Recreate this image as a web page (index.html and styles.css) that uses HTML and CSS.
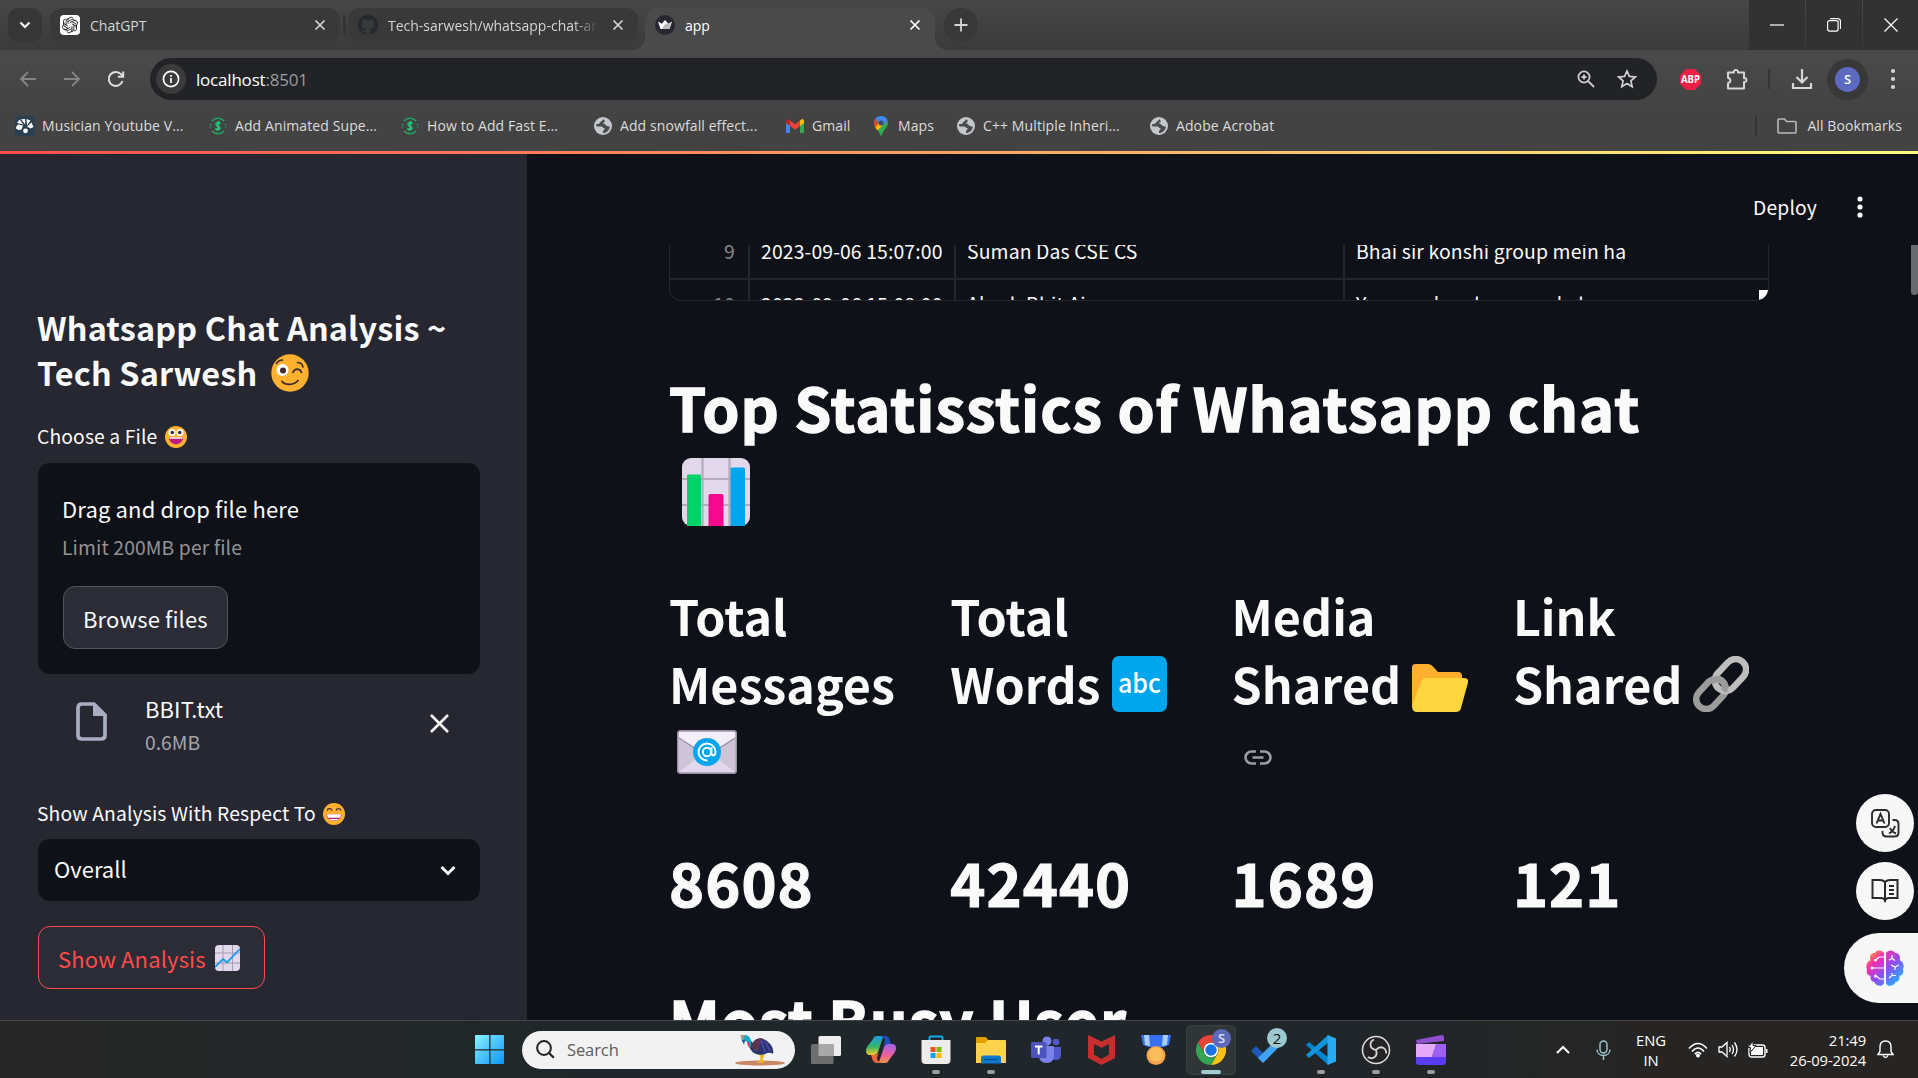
FILE: index.html
```html
<!DOCTYPE html>
<html lang="en">
<head>
<meta charset="utf-8">
<title>app</title>
<link rel="stylesheet" href="styles.css">
</head>
<body>
<svg class="defs" aria-hidden="true">
  <symbol id="close" viewBox="0 0 12 12"><path d="M1.5 1.5l9 9M10.5 1.5l-9 9" fill="none" stroke="currentColor" stroke-width="1.7"/></symbol>
  <symbol id="globe" viewBox="0 0 18 18"><circle cx="9" cy="9" r="9" fill="#c4c7cc"/><path d="M9.500 2.200C8 3 8.300 4 7 4.600 5.500 5.400 6 6.800 4.500 7H2.300c-.6 2 0 2.500 1.700 2.500h3.500c1 0 1.200 1.500 2.200 1.500 1.300 0 1.300 1.300.3 1.800-.8.400-.8 1.400-1.200 3.200 3.800 0 6.500-2.500 7.200-6.500-1.500.5-2.200-.5-3.500-.8-1.500-.4-1-2-2.500-2C8.500 6.700 9 5.500 10 5.300c1.600-.3.500-2.300-.5-3.100z" fill="#4a4b4e"/></symbol>
  <symbol id="swirl" viewBox="0 0 18 18"><g fill="none" stroke="#1fa567" stroke-width="1.500"><path d="M3 4A8 8 0 0 1 15 4M15 14A8 8 0 0 1 3 14"/><path d="M1.500 7v4M16.500 7v4" stroke-dasharray="1.200 1.200"/><path d="M11.500 6.500C10 5 7 5.200 7 7.300c0 2 4 1.500 4 3.700 0 2-3 2-4.800.6M9.800 4.200L8.300 14" stroke="#22c77b" stroke-width="1.600"/></g></symbol>
</svg>

<header class="browser">
  <div class="tabs">
    <div class="tab-search"><svg width="12" height="8" viewBox="0 0 12 8"><path d="M1.500 1.500L6 6l4.500-4.500" fill="none" stroke="#fff" stroke-width="2.200"/></svg></div>
    <div class="tab">
      <svg width="20" height="20" viewBox="0 0 20 20"><rect width="20" height="20" rx="4" fill="#fff"/><g fill="none" stroke="#222" stroke-width=".9" transform="translate(10 10)"><path id="petal" d="M-2-1.200V-4.800a2.900 2.900 0 0 1 5.200-1.800M-2-3.400L1.200-5.200a2.900 2.900 0 0 1 4.200 1.400"/><use href="#petal" transform="rotate(60)"/><use href="#petal" transform="rotate(120)"/><use href="#petal" transform="rotate(180)"/><use href="#petal" transform="rotate(240)"/><use href="#petal" transform="rotate(300)"/></g></svg>
      <span class="tab-title">ChatGPT</span><svg class="x"><use href="#close"/></svg>
    </div>
    <i class="tab-sep"></i>
    <div class="tab second">
      <svg width="20" height="20" viewBox="0 0 16 16"><path fill="#24292f" d="M8 0C3.580 0 0 3.580 0 8c0 3.540 2.290 6.530 5.470 7.590.4.070.550-.170.550-.380 0-.190-.010-.820-.010-1.490-2.010.370-2.530-.490-2.690-.940-.090-.230-.480-.940-.820-1.130-.280-.150-.680-.520-.010-.530.630-.010 1.080.580 1.230.820.720 1.210 1.870.870 2.330.660.070-.520.280-.870.510-1.070-1.780-.200-3.640-.890-3.640-3.950 0-.870.310-1.590.820-2.150-.080-.200-.360-1.020.080-2.120 0 0 .670-.210 2.200.820.640-.180 1.320-.270 2-.270s1.360.090 2 .270c1.530-1.040 2.200-.820 2.200-.820.440 1.100.160 1.920.080 2.120.510.560.820 1.270.820 2.150 0 3.070-1.870 3.750-3.650 3.950.290.250.540.730.540 1.480 0 1.070-.010 1.930-.010 2.200 0 .210.150.460.550.380A8.010 8.010 0 0 0 16 8c0-4.420-3.580-8-8-8z"/></svg>
      <span class="tab-title fade">Tech-sarwesh/whatsapp-chat-analysis</span><svg class="x"><use href="#close"/></svg>
    </div>
    <div class="tab active">
      <svg width="20" height="20" viewBox="0 0 20 20"><circle cx="10" cy="10" r="10" fill="#262730"/><path d="M3 6.500l3.700 2.300L10 5l3.300 3.800L17 6.500l-2.500 7.500h-9z" fill="#fff"/><path d="M10 9l6-1-1.700 6H7z" fill="#bbb"/></svg>
      <span class="tab-title">app</span><svg class="x"><use href="#close"/></svg>
    </div>
    <div class="tab-new"><svg width="14" height="14" viewBox="0 0 14 14"><path d="M7 .5v13M.5 7h13" stroke="#d5d5d5" stroke-width="1.800"/></svg></div>
    <div class="window-controls">
      <span><svg width="14" height="14" viewBox="0 0 14 14"><path d="M0 7h14" stroke="#fff" stroke-width="1.200"/></svg></span>
      <span><svg width="14" height="14" viewBox="0 0 14 14"><rect x=".6" y="2.600" width="10.500" height="10.500" rx="2" fill="none" stroke="#fff" stroke-width="1.200"/><path d="M3 .7h7.500a3 3 0 0 1 3 3V11" fill="none" stroke="#fff" stroke-width="1.200"/></svg></span>
      <span><svg width="14" height="14" viewBox="0 0 14 14"><path d="M.5.5l13 13M13.500.5l-13 13" stroke="#fff" stroke-width="1.200"/></svg></span>
    </div>
  </div>

  <div class="toolbar">
    <div class="nav">
      <svg width="20" height="20" viewBox="0 0 20 20" class="dim"><path d="M18 10H3M10 3l-7 7 7 7"/></svg>
      <svg width="20" height="20" viewBox="0 0 20 20" class="dim"><path d="M2 10h15M10 3l7 7-7 7"/></svg>
      <svg width="20" height="20" viewBox="0 0 20 20"><path d="M16.500 12A7 7 0 1 1 15 5.200L17 7.500M17.200 2.500v5.300h-5.300" stroke-width="2"/></svg>
    </div>
    <div class="omnibox">
      <span class="info"><svg width="18" height="18" viewBox="0 0 18 18"><circle cx="9" cy="9" r="7.600" fill="none" stroke="#fff" stroke-width="1.700"/><path d="M9 8v5M9 5v1.700" stroke="#fff" stroke-width="1.700"/></svg></span>
      <span class="url">localhost<span>:8501</span></span>
      <svg width="18" height="18" viewBox="0 0 18 18"><g fill="none" stroke="#c9cacc" stroke-width="1.800"><circle cx="7" cy="7" r="5.600"/><path d="M11 11l6 6M4.500 7h5M7 4.500v5"/></g></svg>
      <svg width="20" height="20" viewBox="0 0 20 20"><path d="M10 2l2.400 5.400 5.900.6-4.400 3.900 1.300 5.800L10 14.600l-5.200 3.100 1.300-5.800L1.700 8l5.900-.6z" fill="none" stroke="#d0d1d3" stroke-width="1.700"/></svg>
    </div>
    <div class="actions">
      <svg class="abp" width="21" height="21" viewBox="0 0 21 21"><path d="M6.200 0h8.600L21 6.200v8.600L14.800 21H6.200L0 14.800V6.200z" fill="#ed1f45"/><text x="10.500" y="14.300" text-anchor="middle" textLength="19" lengthAdjust="spacingAndGlyphs">ABP</text></svg>
      <svg class="puzzle" width="22" height="22" viewBox="0 0 22 22"><path d="M2 4.500h5.800c-.8-3.300 5-3.300 4.200 0H18v5.700c3.300-.8 3.300 4.600 0 3.800V20.500H2v-5.300c3.200-1 3.200-4.400 0-5.400z" fill="none" stroke="#d6d6d6" stroke-width="2" stroke-linejoin="round"/></svg>
      <i class="bar-sep"></i>
      <svg class="download" width="22" height="22" viewBox="0 0 22 22"><path d="M11 1v13M5.500 9l5.500 5.500L16.500 9M2 15v5h18v-5" fill="none" stroke="#d6d6d6" stroke-width="2.200"/></svg>
      <span class="profile"><b>S</b></span>
      <svg class="kebab" width="6" height="22" viewBox="0 0 6 22"><g fill="#d6d6d6"><circle cx="3" cy="3" r="2.100"/><circle cx="3" cy="11" r="2.100"/><circle cx="3" cy="19" r="2.100"/></g></svg>
    </div>
  </div>

  <nav class="bookmarks">
    <a class="bm bm1"><svg width="20" height="20" viewBox="0 0 20 20"><rect width="20" height="20" rx="1" fill="#2b3f52"/><path d="M1 12.500c0-2 1-3.500 2.500-4L8 9.500l-1.500 4-3 .5zM2 7l2.500-3.500L8.500 8.500zM6 3.200L10 3l.3 5.500zM11.500 3l4 1.500-3.500 5zM12 10.500l4.500-4 2 4.500-3 1.500z" fill="#fff"/><circle cx="10.500" cy="14.800" r="2.400" fill="#fff"/></svg>Musician Youtube V...</a>
    <a class="bm bm2"><svg width="18" height="18"><use href="#swirl"/></svg>Add Animated Supe...</a>
    <a class="bm bm3"><svg width="18" height="18"><use href="#swirl"/></svg>How to Add Fast E...</a>
    <a class="bm bm4"><svg width="18" height="18"><use href="#globe"/></svg>Add snowfall effect...</a>
    <a class="bm bm5"><svg width="18" height="14" viewBox="0 0 18 14"><path d="M0 2v10.500q0 1.500 1.500 1.500H4V5z" fill="#4285f4"/><path d="M18 2v10.500q0 1.500-1.500 1.500H14V5z" fill="#34a853"/><path d="M14 1.500V7l4-3V2q0-2-2-2z" fill="#fbbc04"/><path d="M0 2v2l4 3V1.500L2.500.3Q0-.3 0 2z" fill="#c5221f"/><path d="M4 7V1.500L9 5.300l5-3.800V7l-5 3.800z" fill="#ea4335"/></svg>Gmail</a>
    <a class="bm bm6"><svg width="14" height="20" viewBox="0 0 14 20"><path d="M7 0a7 7 0 0 1 7 7c0 4.500-4.500 6-5.800 11.500L7 20l-1.200-1.500C4.800 13.500 0 11.500 0 7a7 7 0 0 1 7-7z" fill="#34a853"/><path d="M1.600 2.500L5 9.500 2 12.500C.7 11 0 9 0 7c0-2 .7-3.500 1.600-4.500z" fill="#ea4335"/><path d="M9.500 8.500L3.500 14.500 1.300 11.500 5.500 6z" fill="#fbbc04"/><path d="M1.600 2.500A7 7 0 0 1 13.500 4.500L9 9.500 7 4.500 4.800 6z" fill="#4285f4"/><circle cx="7" cy="6.900" r="2.500" fill="#3b4a6b"/></svg>Maps</a>
    <a class="bm bm7"><svg width="18" height="18"><use href="#globe"/></svg>C++ Multiple Inheri...</a>
    <a class="bm bm8"><svg width="18" height="18"><use href="#globe"/></svg>Adobe Acrobat</a>
    <a class="bm all"><i class="bar-sep"></i><svg width="20" height="16" viewBox="0 0 20 16"><path d="M1 14V2q0-1 1-1h5.500l2 2.500H18q1 0 1 1V14q0 1-1 1H2q-1 0-1-1z" fill="none" stroke="#b9b9b9" stroke-width="1.600"/></svg>All Bookmarks</a>
  </nav>
</header>

<div class="rainbow"></div>

<div class="app">
  <aside class="sidebar">
    <h1 class="side-title">Whatsapp Chat Analysis ~<br>Tech Sarwesh <svg class="wink" viewBox="0 0 38 38"><circle cx="19" cy="19" r="18.700" fill="#ffb02e"/><circle cx="11.500" cy="16" r="6" fill="#fff"/><circle cx="12" cy="16.500" r="3" fill="#402a32"/><path d="M22 18.500c1.500-4.500 7-4.500 8.500 0M11 27.500c3.500 4 12 4 16-1M5.500 9.500C7 7 9 6 11.500 6M26.500 8.500c3 0 5 2 5.500 4.500" fill="none" stroke="#402a32" stroke-width="1.700" stroke-linecap="round"/></svg></h1>

    <div class="label">Choose a File <svg class="face" viewBox="0 0 22 22"><circle cx="11" cy="11" r="11" fill="#ffb02e"/><circle cx="7" cy="6.500" r="3.500" fill="#fff"/><circle cx="15" cy="6.500" r="3.500" fill="#fff"/><circle cx="7.300" cy="6.500" r="1.800" fill="#402a32"/><circle cx="14.700" cy="6.500" r="1.800" fill="#402a32"/><path d="M4 11.500h14c0 9-14 9-14 0z" fill="#bb1d80"/><path d="M4.500 11.300h13v1.400h-13z" fill="#fff"/></svg></div>

    <div class="dropzone">
      <div class="drop-main">Drag and drop file here</div>
      <div class="drop-sub">Limit 200MB per file</div>
      <button class="btn">Browse files</button>
    </div>

    <div class="file">
      <svg width="31" height="39" viewBox="0 0 31 39"><path d="M2 6q0-4 4-4h12l11 11v20q0 4-4 4H6q-4 0-4-4z" fill="none" stroke="#a9adc1" stroke-width="3.700"/><path d="M17 1l13 13H17z" fill="#a9adc1"/></svg>
      <div class="file-info"><div class="file-name">BBIT.txt</div><div class="file-size">0.6MB</div></div>
      <svg width="19" height="19" viewBox="0 0 19 19"><path d="M1 1l17 17M18 1L1 18" stroke="#fafafa" stroke-width="2.500"/></svg>
    </div>

    <div class="label">Show Analysis With Respect To <svg class="face" viewBox="0 0 22 22"><circle cx="11" cy="11" r="11" fill="#ffb02e"/><path d="M4 7.500c1-2.500 4-2.500 5 0M13 7.500c1-2.500 4-2.500 5 0" fill="none" stroke="#402a32" stroke-width="1.400"/><path d="M3.500 11h15c0 9-15 9-15 0z" fill="#bb1d80"/><path d="M4 11.200h14c0 2-.6 3-1.200 3.600H5.200C4.400 13.800 4 12.600 4 11.200zM6 16h10q-5 3-10 0z" fill="#fff"/></svg></div>

    <div class="select"><span>Overall</span><svg width="16" height="11" viewBox="0 0 16 11"><path d="M1.500 2L8 8.500 14.500 2" fill="none" stroke="#fafafa" stroke-width="2.800"/></svg></div>

    <button class="btn primary">Show Analysis <svg width="25" height="26" viewBox="0 0 25 26"><rect width="25" height="26" rx="4" fill="#e1d8ec"/><path d="M8 0v26M17.500 0v26M0 8h25M0 18h25" stroke="#a79bb3" stroke-width="1"/><path d="M0 22l8-8 4 3.500L25 4" fill="none" stroke="#1c9cea" stroke-width="1.900"/></svg></button>
  </aside>

  <main class="main">
    <div class="app-header"><span class="deploy">Deploy</span><svg width="6" height="22" viewBox="0 0 6 22"><g fill="#fafafa"><circle cx="3" cy="3" r="2.600"/><circle cx="3" cy="11" r="2.600"/><circle cx="3" cy="19" r="2.600"/></g></svg></div>
    <div class="viewport">
      <div class="table">
        <div class="row"><span class="idx">9</span><span>2023-09-06 15:07:00</span><span>Suman Das CSE CS</span><span>Bhai sir konshi group mein ha</span></div>
        <div class="row"><span class="idx">10</span><span>2023-09-06 15:08:00</span><span>Akash Bbit Ai</span><span>Yaar yes kar dena aap kab</span></div>
        <i class="resize"></i>
      </div>
      <i class="scroll-thumb"></i>

      <h1 class="big">Top Statisstics of Whatsapp chat<br><svg class="chart" viewBox="0 0 68 68"><rect width="68" height="68" rx="9" fill="#e1d8ec"/><path d="M20.500 0v68M47.500 0v68M0 21h68M0 47h68" stroke="#b4acbc" stroke-width="2.200"/><path d="M5 68V18q0-1.500 1.500-1.500h11q1.500 0 1.500 1.500v50z" fill="#00d26a"/><path d="M26.500 68V37.500q0-1.500 1.500-1.500h12q1.500 0 1.500 1.500V68z" fill="#f70a8d"/><path d="M48.500 68V11q0-1.500 1.500-1.500h11.500q1.500 0 1.500 1.500v57z" fill="#00a6ed"/></svg></h1>

      <section class="stats">
        <div><h2>Total<br>Messages<br><svg class="mail" viewBox="0 0 60 44"><rect x=".7" y=".7" width="58.600" height="42.600" rx="2.500" fill="#cdc4d6" stroke="#998ea4" stroke-width="1.400"/><path d="M2 42l26-20 4 0 26 20z" fill="#e1d8ec"/><path d="M2 2h56v6L30 26 2 8z" fill="#f3eef8"/><path d="M2 8l28 18L58 8" fill="none" stroke="#998ea4" stroke-width="1.300"/><circle cx="30" cy="22" r="14" fill="#00a6ed"/><circle cx="30" cy="22" r="4.200" fill="none" stroke="#fff" stroke-width="1.900"/><path d="M34.500 17v6.500c0 3 4 2.500 4-1.500A8.500 8.500 0 1 0 30.500 30.500" fill="none" stroke="#fff" stroke-width="1.900"/></svg></h2><div class="num">8608</div></div>
        <div><h2>Total<br>Words<svg class="abc" viewBox="0 0 55 56"><rect width="55" height="56" rx="7" fill="#00a6ed"/><text x="27.500" y="36.500" text-anchor="middle" textLength="43" lengthAdjust="spacingAndGlyphs">abc</text></svg></h2><div class="num">42440</div></div>
        <div><h2>Media<br>Shared<svg class="folder" viewBox="0 0 56 48"><path d="M0 42V3.500Q0 0 3.500 0H16q3 0 5 2.500l5 5.500H46q4 0 4 4V40z" fill="#ffb02e"/><path d="M0 42L9 18q1.500-4 5-4H52q5 0 4 4.500L49 44q-1 4-5 4H5Q0 48 0 42z" fill="#fcd53f"/></svg><br><svg class="anchor" viewBox="0 0 28 15"><path d="M12 1.500H7.500a6 6 0 0 0 0 12H12M16 1.500h4.500a6 6 0 0 1 0 12H16M8.500 7.500h11" fill="none" stroke="#9c9da1" stroke-width="2.600"/></svg></h2><div class="num">1689</div></div>
        <div><h2>Link<br>Shared<svg class="chain" viewBox="0 0 56 56"><g fill="none" stroke-width="6.500"><rect x="-17" y="-10" width="34" height="20" rx="10" transform="translate(18 38) rotate(-47)" stroke="#9b9b9b"/><rect x="-18" y="-10.500" width="36" height="21" rx="10.500" transform="translate(37.500 19) rotate(-47)" stroke="#bebebe"/><path d="M18 25.500q8-5.500 13 1.500 2.500 4-.5 8" stroke="#9b9b9b"/></g></svg></h2><div class="num">121</div></div>
      </section>

      <h1 class="big next">Most Busy User</h1>
    </div>

    <div class="float">
      <span><svg width="30" height="30" viewBox="0 0 30 30"><g fill="none" stroke="#2a2a2a" stroke-width="1.900"><rect x="2" y="2" width="17" height="17" rx="4"/><path d="M6.500 15.500L10.500 6l4 9.500M8 12.500h5M22.500 12h2q4 0 4 4v8.500q0 4-4 4H16.500q-4 0-4-4V23M19 25.500c3-1.500 5-4 6-7.500M20 20c1 2.500 3 4.500 6 5.500"/></g></svg></span>
      <span><svg width="28" height="26" viewBox="0 0 28 26"><path d="M14 4Q12 2 9 2H1.500v18H10q3 0 4 2.500 1-2.500 4-2.500h8.500V2H19q-3 0-5 2zM14 4v20M18 8h5M18 12h5M18 16h5" fill="none" stroke="#2a2a2a" stroke-width="2"/></svg></span>
      <span class="brain"><svg width="38" height="36" viewBox="0 0 38 36"><defs><linearGradient id="bg" x1="0" y1="0" x2="1" y2="1"><stop offset=".05" stop-color="#ffa01e"/><stop offset=".28" stop-color="#f22fb0"/><stop offset=".55" stop-color="#8a4ff0"/><stop offset=".9" stop-color="#1fb4ff"/></linearGradient></defs><path d="M18 3C16-.5 10-.5 9 3 5 3 3 6.500 4.500 10 .5 12-.5 16 1 19c-1 4 0 6 3.500 7C4 30 6 32 8.500 32c1.500 4.500 7.500 5 9.500 1.500zM20 3c2-3.500 8-3.500 9 0 4 0 6 3.500 4.500 7 4 2 5 6 3.500 9 1 4 0 6-3.500 7 .5 4-1.500 6-4 6-1.500 4.500-7.500 5-9.500 1.500z" fill="url(#bg)"/><path d="M18 7h-5l-3 3M18 18H6M18 29h-4l-4-3M23 10l3-1.500V5M26 8.500l3 2M25 15l4 2 4-2M29 17v3M23 28l3-2.500 4 0M26 25.500V23" fill="none" stroke="#fff" stroke-width="1.200"/><circle cx="9.500" cy="10" r="1.500" fill="#fff"/><circle cx="6" cy="18" r="1.500" fill="#fff"/><circle cx="9.500" cy="26" r="1.500" fill="#fff"/></svg></span>
    </div>
  </main>
</div>

<footer class="taskbar">
  <div class="start"><svg width="30" height="30" viewBox="0 0 30 30"><defs><linearGradient id="win" x1="0" y1="0" x2="1" y2="1"><stop offset="0" stop-color="#8af2ff"/><stop offset="1" stop-color="#0c95fb"/></linearGradient></defs><path d="M0 1q0-1 1-1h13.300v14.300H0zM15.500 0H28q1 0 1 1v13.300H15.500zM0 15.500h14.300V29H1q-1 0-1-1zM15.500 15.500H29V28q0 1-1 1H15.500z" fill="url(#win)"/></svg></div>
  <div class="search"><svg width="19" height="19" viewBox="0 0 19 19"><circle cx="8" cy="8" r="6.900" fill="none" stroke="#222" stroke-width="2"/><path d="M12.800 12.800l5 5" stroke="#222" stroke-width="2.300"/></svg><span>Search</span>
    <svg class="bird" width="52" height="32" viewBox="0 0 52 32"><ellipse cx="26" cy="29" rx="25" ry="2.500" fill="#c98665"/><path d="M24 19l5 3-2 5-3 1.500M27 22l1.500 7" stroke="#f1b520" stroke-width="2.200" fill="none"/><path d="M12 6l3 6q2 7 9 8.500 6 1 9-1.500 4-1 6 1 1-5-2-9-5-7-12-6.500-5 .5-6 4.500L14 4z" fill="#2a3673"/><path d="M18 10q5-7 11-5.500L23 18q-5-2-5-8z" fill="#5c3550"/><path d="M7 1.500l5-.5q5 1.500 5 7v6q-3-5-4-7l-5 1z" fill="#18a9c9"/><path d="M14 7q3 3 1.500 7l-2-3z" fill="#d23a6b"/><path d="M6 1l5 .5-2 5z" fill="#b8926a"/><path d="M8 6l3 0-1 5z" fill="#1b5da8"/><path d="M27 6l4 12M31 7l5 10" stroke="#584ab0" stroke-width="1.300"/></svg></div>
  <div class="apps">
    <span><svg width="30" height="30" viewBox="0 0 30 30"><rect x="7.500" y="1" width="22.500" height="20" rx="1.500" fill="#eee"/><rect x="0" y="9" width="22.500" height="20" rx="1.500" fill="#6e6e6e"/><path d="M7.500 9h15v12h-15z" fill="#a8a8a8"/></svg></span>
    <span><svg width="30" height="30" viewBox="0 0 30 30"><defs><linearGradient id="c1" x1="0" y1="0" x2="0" y2="1"><stop offset="0" stop-color="#1d9be5"/><stop offset=".55" stop-color="#30b66b"/><stop offset="1" stop-color="#f3c826"/></linearGradient><linearGradient id="c2" x1="0" y1="0" x2="0" y2="1"><stop offset="0" stop-color="#a064ee"/><stop offset=".6" stop-color="#ef5f9a"/><stop offset="1" stop-color="#f79645"/></linearGradient></defs><path d="M7 4q1-3 4-3h9q-3 0-4 4l-4 12q-1 3-4 3H4q-4 0-4-4 0-2 1-4z" fill="url(#c1)"/><path d="M14 1h5q4 0 5 5l1 3h-4q-3 0-4 3l2-6q0-4-5-5z" fill="#1d4fc0"/><path d="M23 25q-1 3-4 3h-9q3 0 4-4l4-12q1-3 4-3h4q4 0 4 4 0 2-1 4z" fill="url(#c2)"/><path d="M16 28h-5q-4 0-5-5l-1-3h4q3 0 4-3l-2 6q0 4 5 5z" fill="#ef643c"/></svg></span>
    <span class="run"><svg width="30" height="30" viewBox="0 0 30 30"><path d="M8.500 6V2.500q0-1 1-1h11q1 0 1 1V6" fill="none" stroke="#17a8e8" stroke-width="2"/><path d="M.5 5h29v20q0 4-4 4H4.500q-4 0-4-4z" fill="#ededed"/><path d="M9.500 12h5v5h-5z" fill="#f04f23"/><path d="M15.500 12h5v5h-5z" fill="#80b900"/><path d="M9.500 18h5v5h-5z" fill="#00a3ee"/><path d="M15.500 18h5v5h-5z" fill="#ffb800"/></svg></span>
    <span class="run"><svg width="30" height="30" viewBox="0 0 30 30"><path d="M0 10V3q0-1 1-1h8q1.500 0 3 2.500L13 6H26v4z" fill="#e0a100"/><path d="M0 8h9l3-3h17q1 0 1 1v22H0z" fill="#ffd24d"/><path d="M5 28.500V23q0-2.500 2.500-2.500h15Q25 20.500 25 23v5.500z" fill="#0f78cf"/><path d="M8 24.500h14" stroke="#084d8c" stroke-width="1.300"/></svg></span>
    <span><svg width="30" height="30" viewBox="0 0 30 30"><circle cx="16" cy="6" r="4.500" fill="#7b83eb"/><circle cx="25" cy="7" r="3.300" fill="#5059c9"/><path d="M19 12h11v8q0 5-5 5-4 0-6-3z" fill="#5059c9"/><path d="M8 11h15v9q0 8-7.500 8T8 20z" fill="#7b83eb"/><rect y="7" width="15.500" height="16" rx="1.500" fill="#4b53bc"/><path d="M4 11.500h7.500M7.700 11.500v8" stroke="#fff" stroke-width="2"/></svg></span>
    <span><svg width="27" height="30" viewBox="0 0 27 30"><path d="M0 0l13.500 6.500L27 0v23l-13.500 7L0 23z" fill="#c62f2d"/><path d="M6 9l7.500 3.800L21 9v10.500l-7.500 4.500L6 19.500z" fill="#22282b"/></svg></span>
    <span><svg width="30" height="30" viewBox="0 0 30 30"><path d="M0 0h30l-2 10q-6 3-13 3T2 10z" fill="#3671f1"/><path d="M3 0h5l1 11-5-1zM22 0h5l-1 10-5 1z" fill="#a8cdfd"/><circle cx="15" cy="20.500" r="9.500" fill="#f6a44e"/><circle cx="15" cy="19.500" r="7" fill="#fbbd5a"/></svg></span>
    <span class="run current"><svg width="30" height="30" viewBox="0 0 30 30"><path d="M2 7.500A15 15 0 0 1 28 7.500H15A7.500 7.500 0 0 0 8.500 18.700z" fill="#e94335"/><path d="M28 7.500A15 15 0 0 1 15 30l6.500-11.300A7.500 7.500 0 0 0 15 7.500z" fill="#fbc116"/><path d="M2 7.500L8.500 18.700a7.500 7.500 0 0 0 13 0L15 30A15 15 0 0 1 2 7.500z" fill="#34a353"/><circle cx="15" cy="15" r="7.300" fill="#fff"/><circle cx="15" cy="15" r="5.700" fill="#1a73e8"/></svg><b class="badge blue">S</b></span>
    <span><svg width="30" height="30" viewBox="0 0 30 30"><path d="M0 16l5-5 12 12-5 5z" fill="#1f59b8"/><path d="M7 23L24 6l5 5-17 17z" fill="#3fa2f2"/></svg><b class="badge pale">2</b></span>
    <span class="run"><svg width="30" height="30" viewBox="0 0 30 30"><path d="M0 10l3-3 20 16v7L21 29z" fill="#0084ce"/><path d="M0 20l3 3L23 7V0L21 1z" fill="#1094dc"/><path d="M21.500 0L30 3.500v23L21.500 30z" fill="#2aaaf2"/></svg></span>
    <span class="run"><svg width="30" height="30" viewBox="0 0 30 30"><circle cx="15" cy="15" r="13.500" fill="#262326" stroke="#ddd" stroke-width="1.500"/><g fill="none" stroke="#d5d5d5" stroke-width="1.800"><path id="blade" d="M15 15q-5.500-1-5.500-5.500Q9.500 6 13 4.500"/><use href="#blade" transform="rotate(120 15 15)"/><use href="#blade" transform="rotate(240 15 15)"/></g></svg></span>
    <span class="run"><svg width="30" height="30" viewBox="0 0 30 30"><path d="M0 5L26 0q2 0 2 2v4L1 9z" fill="#8f4fd0"/><path d="M0 9h30v6H0z" fill="#c88bf5"/><path d="M0 9h20l-4 13H0z" fill="#e5a9fa"/><path d="M20 9h10v13H16z" fill="#9d60f2"/><path d="M0 22h30v5q0 3-3 3H3q-3 0-3-3z" fill="#5a3df0"/></svg></span>
  </div>
  <div class="tray">
    <svg class="chev" width="14" height="9" viewBox="0 0 14 9"><path d="M1 8l6-6 6 6" fill="none" stroke="#fff" stroke-width="2"/></svg>
    <svg class="mic" width="15" height="20" viewBox="0 0 15 20"><g fill="none" stroke="#9fc9d0" stroke-width="1.400"><rect x="4" y="1" width="7" height="12" rx="3.500"/><path d="M1 9.500c0 8 13 8 13 0M7.500 15.500V20"/></g></svg>
    <div class="lang">ENG<br>IN</div>
    <svg class="wifi" width="20" height="16" viewBox="0 0 20 16"><g fill="none" stroke="#fff" stroke-width="1.500"><path d="M1 6.500q9-10 18 0M4 9.500q6-7 12 0M6.800 12.200q3.200-4 6.400 0"/></g><circle cx="10" cy="13.500" r="2" fill="#fff"/></svg>
    <svg class="vol" width="20" height="17" viewBox="0 0 20 17"><g fill="none" stroke="#fff" stroke-width="1.300"><path d="M1 6h3l5-4.500v14L4 11H1z"/><path d="M11.500 6q1.500 2.500 0 5M14 4q3 4.500 0 9M16.500 1.500q5 7 0 14"/></g></svg>
    <svg class="bat" width="20" height="17" viewBox="0 0 20 17"><rect x="1" y="4" width="16" height="12" rx="2.500" fill="none" stroke="#fff" stroke-width="1.400"/><path d="M3 6h12v8H3z" fill="#fff"/><path d="M18 8h1.500v4H18z" fill="#fff"/><path d="M5 0L0 6.500h2.500L2 11.500 8 4.500H5z" fill="#fff" stroke="#252626"/></svg>
    <div class="clock">21:49<br>26-09-2024</div>
    <svg class="bell" width="17" height="19" viewBox="0 0 17 19"><path d="M1 14.500l2-3V7q0-6 5.500-6T14 7v4.500l2 3zM6 15.500q2.500 4 5 0" fill="none" stroke="#fff" stroke-width="1.400"/></svg>
  </div>
</footer>
</body>
</html>
```
FILE: styles.css
```css
* { box-sizing: border-box; }
body {
  margin: 0;
  width: 1918px;
  height: 1078px;
  overflow: hidden;
  display: flex;
  flex-direction: column;
  background: #0e1117;
  color: #fafafa;
  font-family: "Noto Sans CJK SC", "Source Sans Pro", sans-serif;
}
svg { display: block; flex: none; }
h1, h2 { margin: 0; }
.defs { position: absolute; width: 0; height: 0; }

/* browser chrome */
.browser { height: 151px; font-family: "Open Sans", "Noto Sans", sans-serif; background: #434343; }
.tabs { height: 50px; display: flex; align-items: flex-start; padding: 8px 0 0 8px; background: linear-gradient(#474747, #3a3a3a); }
.tab-search, .tab-new { width: 34px; height: 34px; border-radius: 11px; background: #363636; display: flex; align-items: center; justify-content: center; }
.tab-new { margin-left: 9px; border-radius: 50%; background: #383838; }
.tab { width: 290px; height: 34px; padding: 0 14px 0 10px; display: flex; align-items: center; border-radius: 12px; background: #393939; color: #d4d4d4; }
.tab-search + .tab { margin-left: 8px; }
.tab-sep { width: 3px; height: 21px; margin: 7px 2px 0 3px; background: #343434; border-radius: 2px; }
.tab.active { position: relative; margin-left: 7px; height: 42px; padding-bottom: 8px; border-radius: 12px 12px 0 0; background: #4a4a4a; color: #fff; }
.tab.active::before, .tab.active::after { content: ""; position: absolute; bottom: 0; width: 12px; height: 12px; background: radial-gradient(circle at 0 0, transparent 11.5px, #4a4a4a 12px); }
.tab.active::before { left: -12px; }
.tab.active::after { right: -12px; background: radial-gradient(circle at 100% 0, transparent 11.5px, #4a4a4a 12px); }
.tab-title { margin-left: 10px; flex: 1; overflow: hidden; white-space: nowrap; font-size: 14px; }
.fade { margin-right: 14px; -webkit-mask-image: linear-gradient(90deg, #000 88%, transparent); mask-image: linear-gradient(90deg, #000 88%, transparent); }
.x { width: 12px; height: 12px; }
.window-controls { margin: -8px 0 0 auto; height: 50px; display: flex; gap: 1px; }
.window-controls span { width: 56px; background: #323232; display: flex; align-items: center; justify-content: center; }
.window-controls span:last-child { width: 55px; padding-left: 1px; }

.toolbar { height: 58px; padding-top: 8px; display: flex; align-items: flex-start; background: linear-gradient(#4a4a4a, #434343); }
.nav { width: 150px; height: 42px; padding-left: 18px; display: flex; align-items: center; gap: 24px; fill: none; stroke: #ddd; stroke-width: 1.8; }
.dim { stroke: #858585; }
.omnibox { width: 1507px; height: 42px; border-radius: 21px; background: #222326; display: flex; align-items: center; padding: 0 20px 0 6px; gap: 22px; }
.info { width: 30px; height: 30px; border-radius: 50%; background: #3b3b3b; display: flex; align-items: center; justify-content: center; }
.url { flex: 1; margin-left: -12px; font-size: 17px; letter-spacing: -.2px; color: #fff; }
.url span { color: #9a9b9e; }
.actions { flex: 1; height: 42px; display: flex; align-items: center; }
.abp { margin-left: 23px; }
.abp text { font: bold 10px "Open Sans", sans-serif; fill: #fff; }
.puzzle { margin-left: 25px; }
.bar-sep { width: 2px; height: 20px; background: #353535; }
.puzzle + .bar-sep { margin-left: 20px; }
.download { margin-left: 21px; }
.profile { width: 41px; height: 41px; margin-left: 14px; border-radius: 50%; background: #383838; display: flex; align-items: center; justify-content: center; }
.profile b { width: 25px; height: 25px; border-radius: 50%; background: #5c6bc0; font: 600 13px/25px "Open Sans", sans-serif; text-align: center; }
.kebab { margin-left: 22px; }

.bookmarks { height: 43px; padding: 0 16px 8px 15px; display: flex; align-items: center; font-size: 14px; letter-spacing: .1px; color: #dcdcdc; white-space: nowrap; }
.bm { display: flex; align-items: center; gap: 8px; }
.bm1 { width: 194px; gap: 7px; }
.bm2 { width: 192px; }
.bm3 { width: 193px; }
.bm4 { width: 192px; }
.bm5 { width: 88px; }
.bm6 { width: 83px; gap: 10px; }
.bm7 { width: 193px; }
.all { margin-left: auto; gap: 10px; }
.all .bar-sep { margin-right: 10px; }
.rainbow { height: 3px; background: linear-gradient(90deg, #ff4b4b, #fffd80); flex: none; }

/* application */
.app { height: 866px; display: flex; overflow: hidden; }
.sidebar { width: 527px; padding: 150px 47px 0 38px; background: #262730; flex: none; }
.side-title { margin-left: -1px; font-size: 32.4px; letter-spacing: .15px; line-height: 45px; font-weight: 600; height: 90px; white-space: nowrap; }
.side-title svg, .label svg { display: inline-block; }
.wink { width: 38px; height: 38px; margin-left: 6px; vertical-align: -6px; }
.label { margin: 27px 0 0 -1px; height: 30px; line-height: 30px; font-size: 19.3px; letter-spacing: .13px; white-space: nowrap; }
.face { width: 22px; height: 22px; margin-left: 3px; vertical-align: -4px; }
.dropzone { margin-top: 12px; height: 211px; padding: 27px 25px 0; border-radius: 12px; background: #0e1117; }
.drop-main { margin-left: -1px; font-size: 22px; letter-spacing: .15px; line-height: 36px; }
.drop-sub { margin: 6px 0 0 -1px; font-size: 19.3px; letter-spacing: .13px; line-height: 30px; color: #929396; }
.btn { display: flex; align-items: center; height: 63px; padding: 0 19px; border: 1px solid #52535b; border-radius: 12px; background: #2b2c36; color: #fafafa; font: 22px "Noto Sans CJK SC", sans-serif; letter-spacing: .15px; white-space: nowrap; }
.dropzone .btn { margin-top: 24px; }
.file { height: 97px; padding: 16px 31px 0 38px; display: flex; align-items: flex-start; }
.file > svg:first-child { margin-top: 12px; }
.file > svg:last-child { margin-top: 24px; }
.file-info { flex: 1; margin-left: 38px; }
.file-name { font-size: 22px; letter-spacing: .1px; line-height: 36px; }
.file-size { font-size: 19.3px; line-height: 33px; color: #a3a4a9; }
.select { margin-top: 11px; height: 62px; padding: 0 24px 0 16px; display: flex; align-items: center; justify-content: space-between; border-radius: 12px; background: #0e1117; font-size: 22px; }
.select span { padding-bottom: 4px; }
.primary { margin-top: 25px; gap: 9px; border-color: #ff4b4b; color: #ff4b4b; padding-right: 24px; }

.main { position: relative; flex: 1; display: flex; flex-direction: column; min-width: 0; }
.app-header { height: 91px; padding: 15px 55px 0 0; display: flex; justify-content: flex-end; align-items: center; gap: 40px; font-size: 19.3px; letter-spacing: .15px; flex: none; }
.deploy { padding-bottom: 1px; }
.viewport { position: relative; flex: 1; overflow: hidden; padding-left: 142px; }
.table { position: relative; width: 1100px; height: 75px; margin-top: -19px; border: 1px solid #26282d; border-radius: 0 0 12px 12px; overflow: hidden; font-size: 19.4px; letter-spacing: .12px; white-space: nowrap; }
.row { height: 53px; line-height: 48px; display: grid; grid-template-columns: 78px 206px 389px 1fr; border-bottom: 2px solid #24262b; }
.row + .row { line-height: 48px; }
.row span { padding-left: 11px; border-left: 2px solid #24262b; }
.row .idx { border: 0; padding: 0 13px 0 0; text-align: right; color: #86878b; }
.resize { position: absolute; right: 0; bottom: 0; width: 9px; height: 10px; background: #fff; border-bottom-right-radius: 9px; }
.scroll-thumb { position: absolute; right: 0; top: 0; width: 7px; height: 50px; border-radius: 0 0 4px 4px; background: #6a6b6f; }
.big { margin-top: 66px; font-size: 59.5px; letter-spacing: 1px; line-height: 79px; font-weight: 700; -webkit-text-stroke: 1.4px #fafafa; white-space: nowrap; }
.chart { width: 68px; height: 68px; margin: 12px 0 0 13px; }
.stats { display: grid; grid-template-columns: repeat(4, 281.3px); margin-top: 55px; }
.stats h2 { height: 204px; font-size: 48.4px; line-height: 68px; font-weight: 600; white-space: nowrap; }
.stats h2 svg { display: inline-block; }
.mail { width: 60px; height: 44px; margin-left: 8px; vertical-align: -2px; }
.abc { width: 55px; height: 56px; margin-left: 11px; vertical-align: -8px; }
.abc text { font: 500 26px "Noto Sans CJK SC", sans-serif; fill: #fff; }
.folder { width: 56px; height: 48px; margin-left: 11px; vertical-align: -8px; }
.chain { width: 56px; height: 56px; margin-left: 11px; vertical-align: -8px; }
.anchor { width: 28px; height: 15px; margin-left: 12px; vertical-align: 7px; }
.num { margin-top: 57px; height: 79px; font-size: 59.5px; letter-spacing: 1.1px; line-height: 79px; font-weight: 700; -webkit-text-stroke: 1.2px #fafafa; }
.next { margin-top: 59px; }

.float { position: absolute; right: 0; bottom: 17px; display: flex; flex-direction: column; align-items: flex-end; }
.float span { width: 58px; height: 58px; margin: 0 4px 10px 0; border-radius: 50%; background: #f7f7f8; display: flex; align-items: center; justify-content: center; }
.float .brain { width: 74px; height: 70px; margin: 3px 0 0; border-radius: 35px 0 0 35px; padding-left: 7px; }

/* desktop taskbar */
.taskbar { position: relative; height: 58px; border-top: 1px solid #43474a; display: flex; align-items: center; background: linear-gradient(90deg, #262625, #20272a 30%, #20262a 70%, #262524 85%); font-family: "Open Sans", "Noto Sans", sans-serif; flex: none; }
.start { margin-left: 475px; width: 47px; }
.search { width: 273px; height: 38px; border-radius: 19px; background: #f2f2f2; color: #5d5d5d; font-size: 16.5px; letter-spacing: -.1px; display: flex; align-items: center; padding: 0 9px 0 14px; }
.search span { flex: 1; margin-left: 12px; }
.apps { display: flex; margin-left: 6px; gap: 5px; }
.apps > span { position: relative; width: 50px; height: 50px; border-radius: 6px; display: flex; align-items: center; justify-content: center; }
.run::after { content: ""; position: absolute; bottom: 1px; left: 21px; width: 8px; height: 4px; border-radius: 2px; background: #9b9d9e; }
.current { background: #303538; box-shadow: inset 0 0 0 1px #3b4043; }
.current::after { left: 15px; width: 20px; background: #9fcbd1; }
.badge { position: absolute; top: 4px; right: 5px; width: 19px; height: 19px; border-radius: 50%; text-align: center; font-size: 13px; line-height: 19px; font-weight: 600; }
.blue { background: #5b69b8; color: #dfe2f5; }
.pale { top: 3px; right: 4px; width: 20px; height: 20px; background: #9cc8cf; color: #111; font-weight: 400; font-size: 15px; line-height: 20px; }
.tray { margin-left: auto; display: flex; align-items: center; font-size: 14.8px; line-height: 20px; letter-spacing: -.1px; padding-right: 24px; color: #fff; }
.mic { margin-left: 26px; }
.lang { width: 44px; margin-left: 18px; text-align: center; }
.wifi { margin-left: 15px; }
.vol { margin-left: 10px; }
.bat { margin-left: 10px; }
.clock { width: 90px; margin-left: 8px; text-align: right; }
.bell { margin-left: 11px; }
```
